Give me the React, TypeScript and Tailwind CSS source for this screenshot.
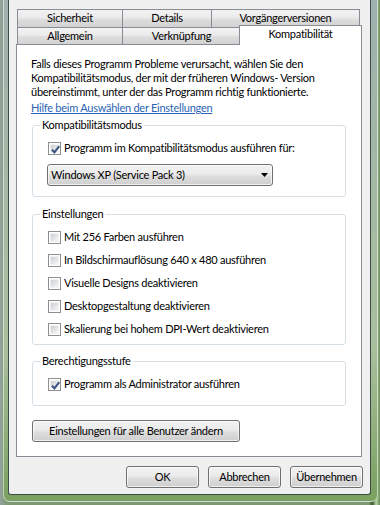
import React from 'react';

const font = { fontFamily: 'Lato, "Liberation Sans", Arial, sans-serif' };

function CheckBox({ checked }: { checked?: boolean }) {
  return (
    <span className="w-[13px] h-[13px] shrink-0 border border-[#8e8f8f] bg-white p-px flex">
      <span className="flex-1 border border-[#f2f2f2] bg-[linear-gradient(135deg,#cbcfd5,#f6f6f6)] relative">
        {checked && (
          <svg viewBox="0 0 9 9" className="absolute -left-px -top-px w-[11px] h-[11px]">
            <path d="M1.6 4.6 L3.6 6.8 L7.6 1.8" fill="none" stroke="#3e5480" strokeWidth="1.7" />
          </svg>
        )}
      </span>
    </span>
  );
}

function Row({ label, checked }: { label: string; checked?: boolean }) {
  return (
    <div className="h-4 flex items-center gap-[3px]">
      <CheckBox checked={checked} />
      <span>{label}</span>
    </div>
  );
}

function Group({ title, children, className = '' }: { title: string; children: React.ReactNode; className?: string }) {
  return (
    <fieldset className={`border border-[#d5dfe5] rounded-[3px] mx-[15px] pl-[15px] pr-2 ${className}`}>
      <legend className="px-[2px] ml-[-8px] leading-[14px]">{title}</legend>
      {children}
    </fieldset>
  );
}

const btn =
  'h-[22px] border border-[#707070] rounded-[3px] bg-[linear-gradient(#f2f2f2,#ebebeb_45%,#dddddd_55%,#cfcfcf)] flex items-center justify-center shadow-[inset_0_0_0_1px_rgba(255,255,255,0.7)]';

const tabBg = 'bg-[linear-gradient(#f2f2f2,#ebebeb_45%,#dddddd_55%,#d2d2d2)]';

export default function App() {
  return (
    <div
      className="w-[380px] h-[505px] overflow-hidden bg-[linear-gradient(90deg,#93a39e_0%,#7f9a72_2%,#7f9a72_97%,#3f5b2c_98%,#b5d5a8_99%,#6b8a58_100%)] pl-[3px] pr-[2px] text-[11px] tracking-[-0.25px] text-black"
      style={font}
    >
      <div className="h-[502px] border-x border-b border-white/50 rounded-b-[7px] pl-[4px] pr-[6px] pb-[5px] bg-[linear-gradient(180deg,#9fb1ae,#a9bf9c_70%,#7aa160)]">
        <div className="h-[495px] bg-[#f0f0f0] border-x border-b border-[#3d4b48] rounded-b-[3px] pt-[9px] pl-[7px] pr-[8px] flex flex-col">
          {/* tabs */}
          <div className="pl-px flex flex-col">
            <div className="flex h-[18px]">
              <div className={`w-[105px] border-t border-l border-[#898c95] ${tabBg} flex items-center justify-center`}>Sicherheit</div>
              <div className={`w-[89px] border-t border-l border-[#898c95] ${tabBg} flex items-center justify-center`}>Details</div>
              <div className={`w-[149px] border-t border-x border-[#898c95] ${tabBg} flex items-center justify-center`}>Vorgängerversionen</div>
            </div>
            <div className="flex h-[17px]">
              <div className={`w-[105px] border-t border-l border-[#898c95] ${tabBg} flex items-center justify-center`}>Allgemein</div>
              <div className={`w-[118px] border-t border-l border-[#898c95] ${tabBg} flex items-center justify-center`}>Verknüpfung</div>
              <div className="w-[123px] -ml-px -mt-[2px] h-[20px] border-t border-x border-[#898c95] bg-white relative z-10 flex items-center justify-center pb-[2px]">
                Kompatibilität
              </div>
            </div>
          </div>
          {/* panel */}
          <div className="h-[413px] border border-[#898c95] bg-white flex flex-col pt-[12px]">
            <p className="px-[14px] leading-[14px] whitespace-nowrap">
              Falls dieses Programm Probleme verursacht, wählen Sie den
              <br />
              Kompatibilitätsmodus, der mit der früheren Windows- Version
              <br />
              übereinstimmt, unter der das Programm richtig funktionierte.
            </p>
            <a className="mx-[14px] mt-[2px] leading-[14px] text-[#2a64b4] underline">Hilfe beim Auswählen der Einstellungen</a>

            <Group title="Kompatibilitätsmodus" className="mt-[3px] pt-[8px] pb-[10px]">
              <Row label="Programm im Kompatibilitätsmodus ausführen für:" checked />
              <div className={`${btn} !justify-between w-[226px] h-[20px] mt-[8px] -ml-px pl-[3px] pr-[4px]`}>
                <span>Windows XP (Service Pack 3)</span>
                <svg viewBox="0 0 7 4" className="w-[7px] h-[4px]">
                  <path d="M0 0 H7 L3.5 4 Z" fill="#000" />
                </svg>
              </div>
            </Group>

            <Group title="Einstellungen" className="mt-[10px] pt-[8px] pb-[7px]">
              <div className="flex flex-col gap-[7px]">
                <Row label="Mit 256 Farben ausführen" />
                <Row label="In Bildschirmauflösung 640 x 480 ausführen" />
                <Row label="Visuelle Designs deaktivieren" />
                <Row label="Desktopgestaltung deaktivieren" />
                <Row label="Skalierung bei hohem DPI-Wert deaktivieren" />
              </div>
            </Group>

            <Group title="Berechtigungsstufe" className="mt-[9px] pt-[8px] pb-[13px]">
              <Row label="Programm als Administrator ausführen" checked />
            </Group>

            <div className={`${btn} w-[208px] ml-[15px] mt-[14px]`}>Einstellungen für alle Benutzer ändern</div>
          </div>
          {/* bottom buttons */}
          <div className="flex justify-end gap-[9px] mt-[9px] mr-[-1px]">
            <div className={`${btn} w-[73px]`}>OK</div>
            <div className={`${btn} w-[73px]`}>Abbrechen</div>
            <div className={`${btn} w-[73px]`}>Übernehmen</div>
          </div>
        </div>
      </div>
    </div>
  );
}
